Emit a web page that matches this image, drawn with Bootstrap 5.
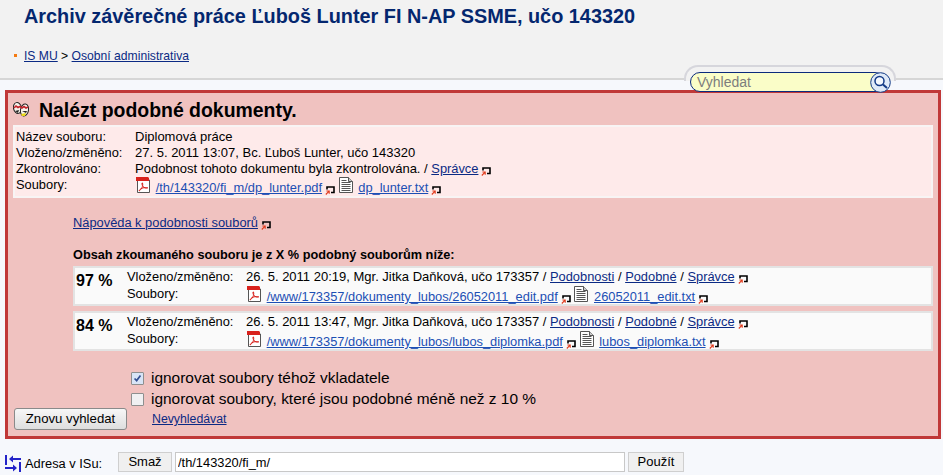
<!DOCTYPE html>
<html lang="cs">
  <head>
    <meta charset="UTF-8" />
    <title>Nalézt podobné dokumenty</title>
    <link href="https://cdn.jsdelivr.net/npm/bootstrap@5.3.3/dist/css/bootstrap.min.css" rel="stylesheet" />
    <style>
      html, body { height: 475px; overflow: hidden; }
      body {
        background: #f6f8fc;
        color: #000;
        font: 12.85px/16px "Liberation Sans", Arial, sans-serif;
        position: relative;
      }
      a { color: #0b2a84; }
      a.file-link { color: #1c4fb4; }
      .page-head { height: 80px; background: #f2f2f2; border-bottom: 2px solid #d6d6d6; padding: 4px 0 0 24px; }
      .page-title { font: bold 19.87px/24px "Liberation Sans", Arial, sans-serif; color: #04276f; margin: 0; }
      .crumbs { margin-top: 20px; line-height: 16px; position: relative; font-size: 12.15px; }
      .crumbs::before { content: ""; position: absolute; left: -10px; top: 6px; width: 3px; height: 3px; background: #f47a12; }
      .search-tab {
        position: absolute; left: 684px; top: 65px; width: 212px; height: 16px;
        background: #f2f2f2; border: 2px solid #d6d6dc; border-bottom: 0; border-radius: 14px 14px 0 0;
      }
      .search-box {
        position: absolute; left: 4px; top: 5px; width: 195px; height: 20px;
        background: #fafdc8; border: 1px solid #0b2a7c; border-radius: 10px;
        padding: 0 0 0 6px; color: #7d7d7d; font-size: 14px; line-height: 18px;
      }
      .search-btn { position: absolute; left: 184px; top: 5px; width: 21px; height: 21px; }
      .result-panel {
        height: 349px; margin: 10px 2px 0 5px; background: #f0c2c0; border: 3px solid #c03838;
      }
      .panel-title { height: 32px; padding: 1px 0 0 5px; }
      .panel-title h2 { font: bold 19.45px/22px "Liberation Sans", Arial, sans-serif; margin: 0 0 0 10px; color: #000; }
      .info-box { margin: 0 5px; height: 73px; background: #feeaea; border: 2px solid #f8f4f4; padding: 2px 1px 0; }
      .meta-row { display: flex; height: 16px; }
      .meta-row > span:first-child { width: 120px; flex: none; }
      .meta-row > span + span { font-size: 13px; margin-left: -1px; }
      .meta-row a { font-size: 12.85px; }
      .help-line { margin: 17px 0 0 65px; height: 16px; }
      .similar-head { margin: 16px 0 0 65px; font-weight: bold; font-size: 12.73px; height: 16px; }
      .similar-box { margin: 3px 5px 0 65px; height: 40px; background: #fafafa; border: 2px solid #e3e3e3; padding: 1px 1px 0; display: flex; }
      .similar-box + .similar-box { margin-top: 5px; }
      .percent { width: 51px; flex: none; padding-top: 1px; font: bold 16px/22px "Liberation Sans", Arial, sans-serif; }
      .similar-box .meta-row { height: 17px; }
      .ignore-list { margin: 17px 0 0 124px; font-size: 15.45px; line-height: 20px; }
      .ignore-list label + label { margin-top: 1px; }
      .ignore-list .form-check-input {
        width: 13px; height: 13px; margin: 0 7px 0 -1px; flex: none; border: 1px solid #8e8f8f; border-radius: 1px;
        background-color: #f0f0f2; opacity: 1;
      }
      .ignore-list .form-check-input:checked { background-color: #d8e4f6; background-image: url("data:image/svg+xml,%3csvg xmlns='http://www.w3.org/2000/svg' viewBox='0 0 13 13'%3e%3cpath fill='none' stroke='%23354f92' stroke-width='2' d='M3 6.5l2.5 2.5 4.5-6'/%3e%3c/svg%3e"); }
      .again-btn, .plain-btn {
        font: 13px/16px "Liberation Sans", Arial, sans-serif; color: #000; padding: 0;
      }
      .again-btn { width: 113px; height: 22px; background: linear-gradient(#f7f7f7, #dedede); border: 1px solid #8a8a8a; border-radius: 3px; font-size: 13.2px; }
      .panel-foot { margin: -1px 0 0 6px; align-items: flex-end; }
      .panel-foot a { margin: 0 0 3px 25px; font-size: 12.3px; }
      .addr-bar { margin: 13px 0 0 5px; height: 20px; }
      .addr-label { width: 113px; flex: none; padding-top: 2px; display: flex; align-items: flex-end; gap: 4px; }
      .plain-btn { height: 20px; background: #f0f0f0; border: 1px solid #cfcfcf; border-radius: 0; }
      .addr-input { width: 450px; height: 20px; margin: 0 3px; background: #fff; border: 1px solid #c8c8c8; padding: 0 2px; font: 12.85px/18px "Liberation Sans", Arial, sans-serif; color: #000; border-radius: 0; outline: 0; }
      .ico { display: inline-block; }
      .ico-doc { width: 14px; height: 16px; vertical-align: -1px; margin-right: 2px; }
      .ico-ext { width: 10px; height: 9px; margin-left: 3px; vertical-align: -3px; }
    </style>
  </head>
  <body>
    <svg width="0" height="0" class="position-absolute">
      <symbol id="pdf" viewBox="0 0 14 16">
        <path d="M1.500 3h12v12.500h-12z" fill="#fff" stroke="#555" />
        <path d="M0 0h12l1 1v3H0z" fill="#d8211c" />
        <path d="M3 14c2-1 4.500-5 3.500-8-.8-1-.8 2 .5 3.500s3 2 4.500 1.500-3-.8-5.500.2-2.500 2-3 2.800z" fill="none" stroke="#d8211c" stroke-width="1" />
      </symbol>
      <symbol id="txt" viewBox="0 0 14 16">
        <path d="M.5 .5h9l4 4v11h-13z" fill="#fff" stroke="#555" />
        <path d="M9.500 .5v4h4" fill="#ccc" stroke="#555" />
        <path d="M2.500 3.500h5M2.500 5.500h9M2.500 7.500h9M2.500 9.500h9M2.500 11.500h9M2.500 13.500h9" stroke="#555" />
      </symbol>
      <symbol id="ext" viewBox="0 0 10 9">
        <path d="M2 3.500V1h7v5.500H6" fill="none" stroke="#000" stroke-width="1.600" />
        <path d="M.8 8.500l2.800-2.800M1.400 5h2.800v2.800" fill="none" stroke="#e0381a" stroke-width="1.100" />
      </symbol>
    </svg>

    <header class="page-head">
      <h1 class="page-title">Archiv závěrečné práce Ľuboš Lunter FI N-AP SSME, učo 143320</h1>
      <div class="crumbs"><a href="#">IS MU</a> &gt; <a href="#">Osobní administrativa</a></div>
    </header>

    <div class="search-tab">
      <div class="search-box">Vyhledat</div>
      <svg class="search-btn" viewBox="0 0 21 21">
        <circle cx="10.500" cy="10.500" r="9.800" fill="#dfeaf8" stroke="#123a86" stroke-width="1" />
        <circle cx="9.500" cy="9" r="4.500" fill="#f4f8fd" stroke="#123a86" stroke-width="1.500" />
        <path d="M13 12.500l4 3.500" stroke="#123a86" stroke-width="2" />
      </svg>
    </div>

    <main class="result-panel">
      <div class="panel-title d-flex align-items-center">
        <svg width="16" height="15" viewBox="0 0 16 15">
          <ellipse cx="4.500" cy="6" rx="4" ry="5.500" fill="#f6f2ea" stroke="#222" transform="rotate(-12 4.500 6)" />
          <ellipse cx="11.500" cy="8" rx="4" ry="6" fill="#f6f2ea" stroke="#222" transform="rotate(10 11.500 8)" />
          <path d="M1 6l2-2 2 1.500 2-1 2 1.500 2-1.500 2 1.500 2-1" fill="none" stroke="#c3242c" stroke-width="1.600" />
          <path d="M2 9l4-1-1 3zM9 9l5 0-1 2z" fill="#222" />
          <path d="M8 12l5-1-1 3-3 0z" fill="#e8d818" />
        </svg>
        <h2>Nalézt podobné dokumenty.</h2>
      </div>

      <section class="info-box">
        <div class="meta-row"><span>Název souboru:</span><span>Diplomová práce</span></div>
        <div class="meta-row"><span>Vloženo/změněno:</span><span>27. 5. 2011 13:07, Bc. Ľuboš Lunter, učo 143320</span></div>
        <div class="meta-row"><span>Zkontrolováno:</span><span class="ps-0">Podobnost tohoto dokumentu byla zkontrolována. / <a href="#">Správce</a><svg class="ico ico-ext"><use href="#ext" /></svg></span></div>
        <div class="meta-row"><span>Soubory:</span><span class="ms-0"><svg class="ico ico-doc"><use href="#pdf" /></svg> <a class="file-link" href="#">/th/143320/fi_m/dp_lunter.pdf</a><svg class="ico ico-ext"><use href="#ext" /></svg> <svg class="ico ico-doc"><use href="#txt" /></svg> <a class="file-link" href="#">dp_lunter.txt</a><svg class="ico ico-ext"><use href="#ext" /></svg></span></div>
      </section>

      <div class="help-line"><a href="#">Nápověda k podobnosti souborů</a><svg class="ico ico-ext"><use href="#ext" /></svg></div>
      <div class="similar-head">Obsah zkoumaného souboru je z X % podobný souborům níže:</div>

      <section class="similar-box">
        <div class="percent">97 %</div>
        <div class="flex-grow-1">
          <div class="meta-row"><span>Vloženo/změněno:</span><span>26. 5. 2011 20:19, Mgr. Jitka Daňková, učo 173357 / <a href="#">Podobnosti</a> / <a href="#">Podobné</a> / <a href="#">Správce</a><svg class="ico ico-ext"><use href="#ext" /></svg></span></div>
          <div class="meta-row"><span>Soubory:</span><span class="ms-0"><svg class="ico ico-doc"><use href="#pdf" /></svg> <a class="file-link" href="#">/www/173357/dokumenty_lubos/26052011_edit.pdf</a><svg class="ico ico-ext"><use href="#ext" /></svg> <svg class="ico ico-doc"><use href="#txt" /></svg> <a class="file-link" href="#">26052011_edit.txt</a><svg class="ico ico-ext"><use href="#ext" /></svg></span></div>
        </div>
      </section>
      <section class="similar-box">
        <div class="percent">84 %</div>
        <div class="flex-grow-1">
          <div class="meta-row"><span>Vloženo/změněno:</span><span>26. 5. 2011 13:47, Mgr. Jitka Daňková, učo 173357 / <a href="#">Podobnosti</a> / <a href="#">Podobné</a> / <a href="#">Správce</a><svg class="ico ico-ext"><use href="#ext" /></svg></span></div>
          <div class="meta-row"><span>Soubory:</span><span class="ms-0"><svg class="ico ico-doc"><use href="#pdf" /></svg> <a class="file-link" href="#">/www/173357/dokumenty_lubos/lubos_diplomka.pdf</a><svg class="ico ico-ext"><use href="#ext" /></svg> <svg class="ico ico-doc"><use href="#txt" /></svg> <a class="file-link" href="#">lubos_diplomka.txt</a><svg class="ico ico-ext"><use href="#ext" /></svg></span></div>
        </div>
      </section>

      <div class="ignore-list">
        <label class="d-flex align-items-center"><input class="form-check-input" type="checkbox" checked />ignorovat soubory téhož vkladatele</label>
        <label class="d-flex align-items-center"><input class="form-check-input" type="checkbox" />ignorovat soubory, které jsou podobné méně než z 10 %</label>
      </div>
      <div class="panel-foot d-flex">
        <button class="again-btn" type="button">Znovu vyhledat</button>
        <a href="#">Nevyhledávat</a>
      </div>
    </main>

    <footer class="addr-bar d-flex">
      <div class="addr-label">
        <svg width="16" height="17" viewBox="0 0 16 17">
          <path d="M1 0v10M15 7v10M6 4h10M0 13h10" fill="none" stroke="#2323c8" stroke-width="2" />
          <path d="M8 0.500L4 4l4 3.500zM8 9.500l4 3.500-4 3.500z" fill="#2323c8" />
        </svg>
        <span>Adresa v ISu:</span>
      </div>
      <button class="plain-btn" type="button" style="width: 54px">Smaž</button>
      <input class="addr-input" type="text" value="/th/143320/fi_m/" />
      <button class="plain-btn" type="button" style="width: 56px">Použít</button>
    </footer>

    <script src="https://cdn.jsdelivr.net/npm/bootstrap@5.3.3/dist/js/bootstrap.bundle.min.js"></script>
  </body>
</html>
